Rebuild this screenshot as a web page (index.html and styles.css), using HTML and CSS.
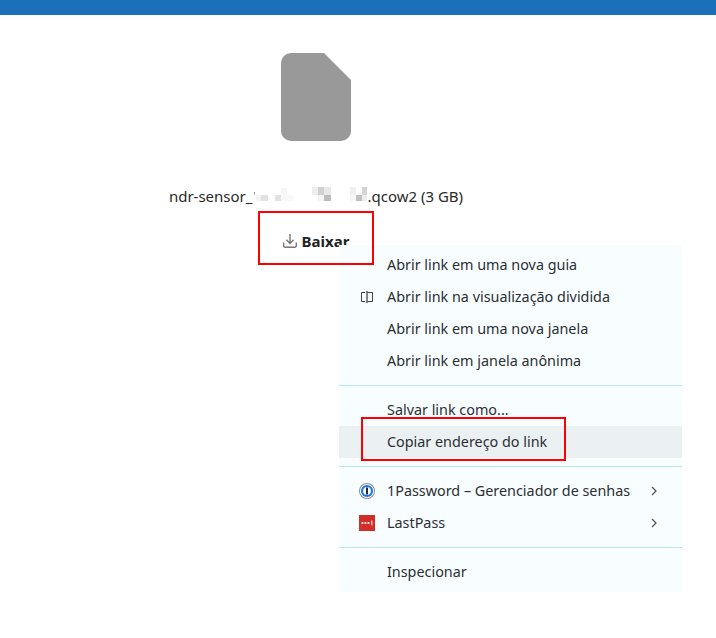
FILE: index.html
```html
<!DOCTYPE html>
<html lang="pt-BR">
<head>
<meta charset="utf-8">
<title>Baixar</title>
<link rel="stylesheet" href="styles.css">
</head>
<body>
<div class="topbar"></div>
<main class="content">
  <svg class="file-icon" width="70" height="88" viewBox="0 0 70 88"><path d="M10 0H43L70 27V78A10 10 0 0 1 60 88H10A10 10 0 0 1 0 78V10A10 10 0 0 1 10 0Z" fill="#999"/></svg>
  <div class="filename">ndr-sensor_<svg class="redact" width="113" height="20" viewBox="0 0 113 20">
    <rect x="0" y="5" width="1" height="3" fill="#aaa"/>
    <rect x="2" y="8" width="5" height="6" fill="#f3f3f3"/><rect x="7" y="8" width="7" height="6" fill="#e2e2e2"/>
    <rect x="21" y="8" width="6" height="6" fill="#e2e2e2"/><rect x="27" y="1" width="6" height="7" fill="#f6f6f6"/><rect x="27" y="8" width="6" height="6" fill="#f8f8f8"/><rect x="33" y="8" width="6" height="6" fill="#f8f8f8"/>
    <rect x="58" y="0" width="6" height="8" fill="#eee"/><rect x="64" y="0" width="6" height="8" fill="#d0d0d0"/><rect x="70" y="0" width="7" height="8" fill="#e8e8e8"/><rect x="64" y="8" width="6" height="6" fill="#f4f4f4"/><rect x="70" y="8" width="7" height="6" fill="#bdbdbd"/>
    <rect x="96" y="0" width="6" height="8" fill="#f0f0f0"/><rect x="96" y="8" width="6" height="6" fill="#f6f6f6"/><rect x="102" y="8" width="6" height="6" fill="#c0c0c0"/><rect x="108" y="0" width="5" height="8" fill="#d4d4d4"/><rect x="108" y="8" width="5" height="6" fill="#eee"/>
  </svg>.qcow2 (3 GB)</div>
  <a class="download">
    <svg width="14" height="14" viewBox="0 0 14 14" fill="none" stroke="#777" stroke-width="1.4"><path d="M7 0V9M3.4 5.8L7 9.4L10.6 5.8"/><path d="M0.7 8.5V11.7A1.5 1.5 0 0 0 2.2 13.2H11.8A1.5 1.5 0 0 0 13.3 11.7V8.5"/></svg>
    <span>Baixar</span>
  </a>
</main>

<div class="menu">
  <div class="item"><span class="ico"></span><span class="label">Abrir link em uma nova guia</span></div>
  <div class="item"><span class="ico"><svg width="16" height="16" viewBox="0 0 16 16" fill="none" stroke="#444" stroke-width="1"><path d="M6 3.5H2.5V12.5H6M8 3.5H13.5V12.5H8"/><path d="M8 2V14" stroke-width="1.6" stroke="#666"/></svg></span><span class="label">Abrir link na visualização dividida</span></div>
  <div class="item"><span class="ico"></span><span class="label">Abrir link em uma nova janela</span></div>
  <div class="item"><span class="ico"></span><span class="label">Abrir link em janela anônima</span></div>
  <div class="sep"></div>
  <div class="item"><span class="ico"></span><span class="label">Salvar link como...</span></div>
  <div class="item hover"><span class="ico"></span><span class="label">Copiar endereço do link</span></div>
  <div class="sep"></div>
  <div class="item"><span class="ico"><svg width="16" height="16" viewBox="0 0 16 16"><circle cx="8" cy="8" r="8" fill="#8a8f96"/><circle cx="8" cy="8" r="7" fill="#fff"/><circle cx="8" cy="8" r="6" fill="#1a73e8"/><circle cx="8" cy="8" r="3.9" fill="#fff"/><rect x="7" y="4.5" width="2" height="7" fill="#1b2a3a"/></svg></span><span class="label">1Password – Gerenciador de senhas</span><svg class="chev" width="8" height="10" viewBox="0 0 8 10" fill="none" stroke="#555" stroke-width="1.3"><path d="M2 1L6 5L2 9"/></svg></div>
  <div class="item"><span class="ico"><svg width="16" height="16" viewBox="0 0 16 16"><rect width="16" height="16" fill="#d32d27"/><circle cx="3.5" cy="8" r="1.1" fill="#fff"/><circle cx="6.5" cy="8" r="1.1" fill="#fff"/><circle cx="9.5" cy="8" r="1.1" fill="#fff"/><rect x="12.4" y="5.5" width="0.9" height="5" fill="#fff"/></svg></span><span class="label">LastPass</span><svg class="chev" width="8" height="10" viewBox="0 0 8 10" fill="none" stroke="#555" stroke-width="1.3"><path d="M2 1L6 5L2 9"/></svg></div>
  <div class="sep"></div>
  <div class="item"><span class="ico"></span><span class="label">Inspecionar</span></div>
</div>

<div class="mark mark-download"></div>
<div class="mark mark-copy"></div>
</body>
</html>
```

FILE: styles.css
```css
html, body {
  margin: 0;
  padding: 0;
  background: #fff;
  height: 100%;
  overflow: hidden;
}
body {
  position: relative;
  font-family: "Noto Sans", sans-serif;
  font-size: 15px;
  color: #2a2a2a;
}
.topbar {
  height: 15px;
  background: #1b70b9;
}
.content {
  display: flex;
  flex-direction: column;
  align-items: center;
  width: 632px;
  padding-top: 38px;
}
.file-icon {
  display: block;
}
.filename {
  display: flex;
  align-items: center;
  margin-top: 45px;
  height: 20px;
  white-space: nowrap;
}
.redact {
  display: block;
  margin: 1px 0 0 2px;
}
.download {
  display: flex;
  align-items: center;
  gap: 5px;
  margin-top: 25px;
  height: 20px;
  font-weight: 700;
  color: #222;
}
.menu {
  position: absolute;
  left: 339px;
  top: 245px;
  width: 343px;
  padding: 4px 0;
  background: #f8fdff;
  color: #2b2f33;
  font-size: 14.36px;
}
.item {
  display: flex;
  align-items: center;
  height: 32px;
  padding-left: 20px;
  position: relative;
  white-space: nowrap;
}
.label {
  margin-top: -2px;
}
.item.hover {
  background: #ebf0f3;
}
.ico {
  display: flex;
  width: 16px;
  height: 16px;
  margin-right: 12px;
}
.chev {
  position: absolute;
  right: 24px;
  top: 11px;
}
.sep {
  height: 1px;
  margin: 8px 0;
  background: #b5e8f3;
}
.mark {
  position: absolute;
  border: 2px solid #f00;
  box-sizing: border-box;
}
.mark-download {
  left: 258px;
  top: 211px;
  width: 116px;
  height: 54px;
}
.mark-copy {
  left: 361px;
  top: 417px;
  width: 205px;
  height: 44px;
}
```
